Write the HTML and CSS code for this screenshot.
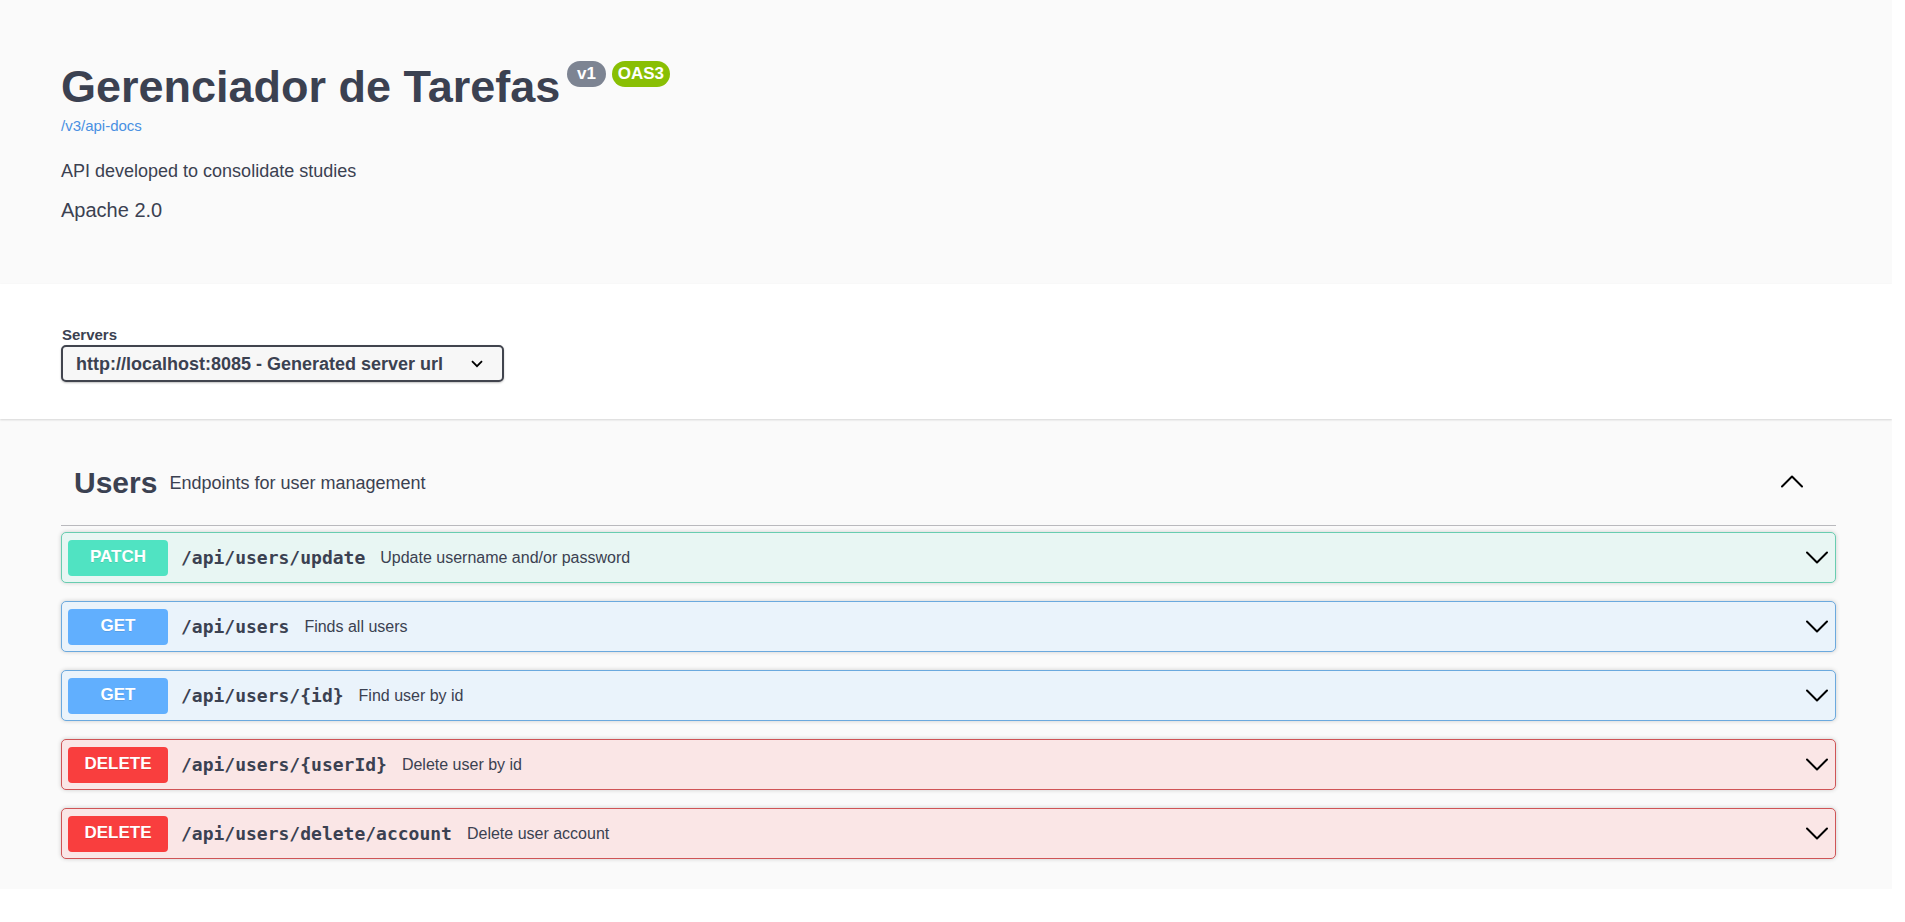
FILE: index.html
```html
<!DOCTYPE html>
<html lang="pt-BR">
<head>
<meta charset="utf-8">
<meta name="viewport" content="width=device-width, initial-scale=1">
<title>Gerenciador de Tarefas</title>
<link rel="stylesheet" href="styles.css">
</head>
<body>
<svg class="sprite" aria-hidden="true">
  <symbol id="chevron-down" viewBox="0 0 22 13"><path d="M1 1.5L11 11.5L21 1.5" fill="none" stroke="currentColor" stroke-width="2" stroke-linecap="round" stroke-linejoin="round"/></symbol>
  <symbol id="chevron-up" viewBox="0 0 22 13"><path d="M1 11.5L11 1.5L21 11.5" fill="none" stroke="currentColor" stroke-width="2" stroke-linecap="round" stroke-linejoin="round"/></symbol>
  <symbol id="chevron-small" viewBox="0 0 12 8"><path d="M1 1.2L6 6.2L11 1.2" fill="none" stroke="currentColor" stroke-width="1.8"/></symbol>
</svg>
<div class="page">
  <header class="info">
    <div class="title-row">
      <h1 class="title">Gerenciador de Tarefas</h1>
      <span class="badge">&nbsp;v1&nbsp;</span>
      <span class="badge badge-oas">OAS3</span>
    </div>
    <a class="docs-link" href="/v3/api-docs">/v3/api-docs</a>
    <p class="description">API developed to consolidate studies</p>
    <p class="license">Apache 2.0</p>
  </header>
  <section class="servers">
    <label class="servers-label" for="servers">Servers</label>
    <div class="select-wrap">
      <select class="select" id="servers">
        <option>http://localhost:8085 - Generated server url</option>
      </select>
      <svg class="select-arrow" aria-hidden="true"><use href="#chevron-small"/></svg>
    </div>
  </section>
  <main class="operations">
    <div class="tag">
      <h2 class="tag-name">Users</h2>
      <p class="tag-text">Endpoints for user management</p>
      <button class="toggle" type="button" aria-label="Collapse Users"><svg class="chevron" aria-hidden="true"><use href="#chevron-up"/></svg></button>
    </div>
    <div class="list">
      <button class="op op-patch" type="button">
        <span class="method">PATCH</span><span class="path">/api/users/update</span><span class="summary">Update username and/or password</span>
        <svg class="chevron" aria-hidden="true"><use href="#chevron-down"/></svg>
      </button>
      <button class="op op-get" type="button">
        <span class="method">GET</span><span class="path">/api/users</span><span class="summary">Finds all users</span>
        <svg class="chevron" aria-hidden="true"><use href="#chevron-down"/></svg>
      </button>
      <button class="op op-get" type="button">
        <span class="method">GET</span><span class="path">/api/users/{id}</span><span class="summary">Find user by id</span>
        <svg class="chevron" aria-hidden="true"><use href="#chevron-down"/></svg>
      </button>
      <button class="op op-delete" type="button">
        <span class="method">DELETE</span><span class="path">/api/users/{userId}</span><span class="summary">Delete user by id</span>
        <svg class="chevron" aria-hidden="true"><use href="#chevron-down"/></svg>
      </button>
      <button class="op op-delete" type="button">
        <span class="method">DELETE</span><span class="path">/api/users/delete/account</span><span class="summary">Delete user account</span>
        <svg class="chevron" aria-hidden="true"><use href="#chevron-down"/></svg>
      </button>
    </div>
  </main>
</div>
</body>
</html>
```

FILE: styles.css
```css
* { box-sizing: border-box; }

body {
  margin: 0;
  background: #fff;
  color: #3b4151;
  font-family: "Liberation Sans", Arial, sans-serif;
}

h1, h2, p { margin: 0; }

.sprite { display: none; }

.page {
  margin-right: 13px;
  overflow: hidden;
  background: #fafafa;
}

/* Header */
.info { padding: 61px 56px 63px 61px; }

.title-row {
  display: flex;
  align-items: flex-start;
  gap: 6px;
}

.title {
  padding-right: 1px;
  font-size: 45px;
  line-height: 52px;
}

.badge {
  padding: 0 5px;
  border-radius: 13px;
  background: #7d8492;
  color: #fff;
  font-size: 17px;
  font-weight: 700;
  line-height: 25px;
  padding-bottom: 1px;
}

.badge-oas {
  padding-right: 6px;
  padding-left: 6px;
  background: #89bf04;
}

.docs-link {
  display: block;
  width: fit-content;
  margin-top: 4px;
  color: #4990e2;
  font-size: 15px;
  line-height: 18px;
  text-decoration: none;
}

.description {
  margin-top: 26px;
  font-size: 18px;
  line-height: 20px;
}

.license {
  margin-top: 18px;
  font-size: 20px;
  line-height: 22px;
}

/* Servers */
.servers {
  padding: 41px 56px 37px 61px;
  background: #fff;
  box-shadow: 0 1px 2px rgba(0, 0, 0, 0.15);
}

.servers-label {
  display: block;
  padding-left: 1px;
  font-size: 15px;
  font-weight: 700;
  line-height: 20px;
}

.select-wrap {
  position: relative;
  width: 443px;
  max-width: 100%;
}

.select {
  display: block;
  width: 100%;
  height: 37px;
  padding: 0 40px 0 13px;
  border: 2px solid #41444e;
  border-radius: 5px;
  background: #f7f7f7;
  box-shadow: 0 1px 2px rgba(0, 0, 0, 0.25);
  color: #3b4151;
  font: 700 18px "Liberation Sans", Arial, sans-serif;
  appearance: none;
}

.select-arrow {
  position: absolute;
  top: 15px;
  right: 21px;
  width: 12px;
  height: 8px;
  color: #000;
  pointer-events: none;
}

/* Operations */
.operations { padding: 36px 56px 30px 61px; }

.tag {
  display: flex;
  align-items: center;
  gap: 12px;
  height: 71px;
  padding: 0 33px 15px 13px;
  border-bottom: 1px solid #b9b9bd;
}

.tag-name {
  font-size: 30px;
  line-height: 34px;
}

.tag-text {
  flex: 1;
  font-size: 18px;
  line-height: 20px;
}

.toggle {
  display: flex;
  padding: 0 0 2px;
  border: 0;
  background: none;
  color: #000;
}

.chevron {
  width: 22px;
  height: 13px;
}

.list {
  display: grid;
  gap: 18px;
  padding-top: 6px;
}

.op {
  display: flex;
  align-items: center;
  gap: 13px;
  width: 100%;
  height: 51px;
  padding: 0 7px 0 6px;
  border: 1px solid;
  border-radius: 5px;
  box-shadow: 0 0 4px rgba(0, 0, 0, 0.19);
  color: #3b4151;
  font: 16px "Liberation Sans", Arial, sans-serif;
  text-align: left;
}

.op-patch { background: #e8f6f3; border-color: #68cdb0; }
.op-get { background: #eaf3fb; border-color: #6ba9de; }
.op-delete { background: #fae6e6; border-color: #cf5456; }

.method {
  width: 100px;
  padding-bottom: 2px;
  border-radius: 4px;
  color: #fff;
  font-size: 17px;
  font-weight: 700;
  line-height: 34px;
  text-align: center;
  text-shadow: 0 1px 0 rgba(0, 0, 0, 0.1);
}

.op-patch .method { background: #50e3c2; }
.op-get .method { background: #61affe; }
.op-delete .method { background: #f93e3e; }

.path {
  padding-right: 2px;
  font-family: "DejaVu Sans Mono", monospace;
  font-size: 18px;
  font-weight: 700;
}

.summary { flex: 1; }

.op .chevron { color: #000; }
```
